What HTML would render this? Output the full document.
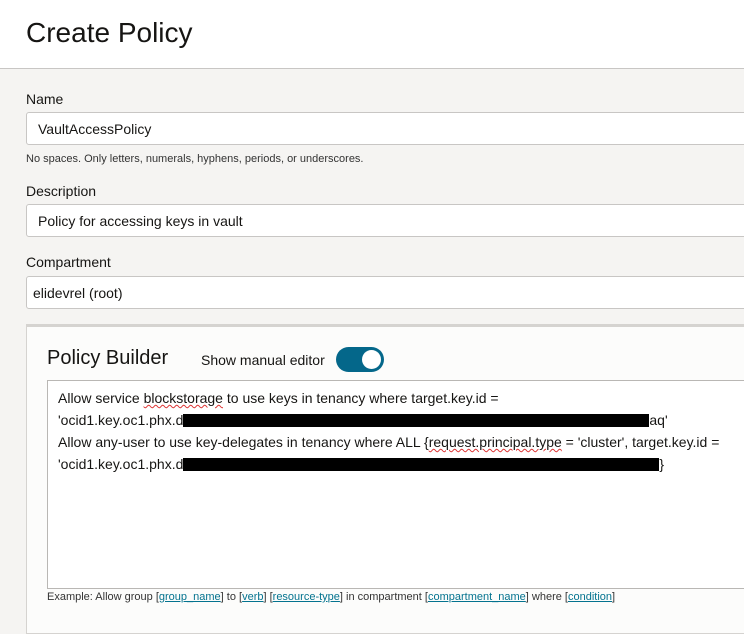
<!DOCTYPE html>
<html><head><style>
body{margin:0;width:744px;height:619px;overflow:hidden;background:#f5f4f2;font-family:"Liberation Sans",Arial,sans-serif;color:#161513;position:relative}
.hdr{position:absolute;left:0;top:0;width:744px;height:68px;background:#fff;border-bottom:1px solid #c8c6c4}
.hdr h1{position:absolute;left:26px;top:17px;margin:0;font-size:28px;font-weight:normal;color:#161513}
.lbl{position:absolute;left:26px;font-size:14px;color:#161513}
.inp{position:absolute;left:26px;width:730px;height:33px;background:#fff;border:1px solid #c8c6c4;border-radius:3px;font-size:14px;line-height:33px;padding-left:11px;box-sizing:border-box}
.hint{position:absolute;left:26px;font-size:11px;color:#333}
.panel{position:absolute;left:26px;top:324px;width:740px;height:310px;background:#fcfcfb;border:1px solid #d5d3d0;border-top:3px solid #d5d3d0;box-sizing:border-box}
.ta{position:absolute;left:47px;top:380px;width:720px;height:209px;background:#fff;border:1px solid #b9b7b4;box-sizing:border-box;padding:6px 10px;font-size:14px;line-height:22px;white-space:nowrap}
.red{display:inline-block;background:#000;height:13px;vertical-align:-2px}
.sq{text-decoration:underline wavy #d33;text-decoration-thickness:1px}
a{color:#04738f;text-decoration:underline}
</style></head><body>
<div class="hdr"><h1>Create Policy</h1></div>
<div class="lbl" style="top:91px">Name</div>
<div class="inp" style="top:112px">VaultAccessPolicy</div>
<div class="hint" style="top:153px">No spaces. Only letters, numerals, hyphens, periods, or underscores.</div>
<div class="lbl" style="top:183px">Description</div>
<div class="inp" style="top:204px">Policy for accessing keys in vault</div>
<div class="lbl" style="top:254px">Compartment</div>
<div class="inp" style="top:276px;padding-left:6px">elidevrel (root)</div>
<div class="panel"></div>
<div style="position:absolute;left:47px;top:347px;font-size:20px">Policy Builder</div>
<div style="position:absolute;left:201px;top:352px;font-size:14px">Show manual editor</div>
<div style="position:absolute;left:336px;top:347px;width:48px;height:25px;border-radius:13px;background:#04678a"><div style="position:absolute;right:3px;top:3px;width:19px;height:19px;border-radius:50%;background:#fff"></div></div>
<div class="ta">Allow service <span class="sq">blockstorage</span> to use keys in tenancy where target.key.id =<br>'ocid1.key.oc1.phx.d<span class="red" style="width:466px"></span>aq'<br>Allow any-user to use key-delegates in tenancy where ALL {<span class="sq">request.principal.type</span> = 'cluster', target.key.id =<br>'ocid1.key.oc1.phx.d<span class="red" style="width:476px"></span>}</div>
<div style="position:absolute;left:47px;top:591px;font-size:11px;color:#333">Example: Allow group [<a>group_name</a>] to [<a>verb</a>] [<a>resource-type</a>] in compartment [<a>compartment_name</a>] where [<a>condition</a>]</div>
</body></html>
